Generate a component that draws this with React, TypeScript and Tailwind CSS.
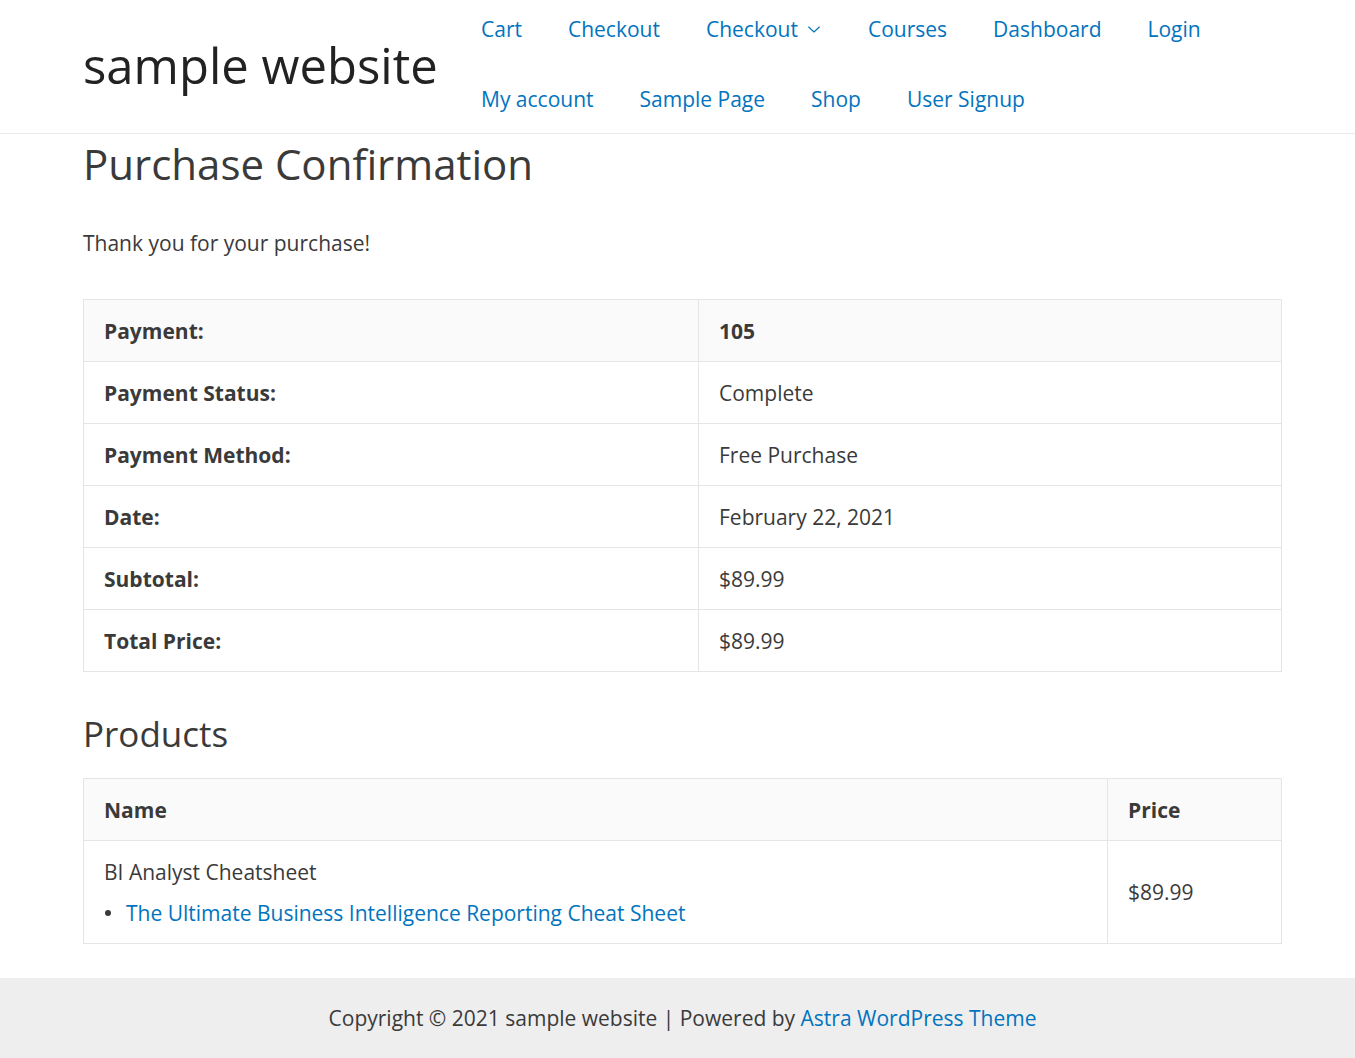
import React from "react";

const navRow1 = ["Cart", "Checkout", "Checkout▾", "Courses", "Dashboard", "Login"];
const navRow2 = ["My account", "Sample Page", "Shop", "User Signup"];

function NavItem({ label }: { label: string }) {
  const hasChevron = label.endsWith("▾");
  const text = hasChevron ? label.slice(0, -1) : label;
  return (
    <li className="h-[70px] px-[23px] flex items-center">
      <a href="#" className="text-[#0274be] flex items-center">
        {text}
        {hasChevron && (
          <svg
            className="ml-[8px]"
            width="16"
            height="16"
            viewBox="0 0 24 24"
            fill="none"
            stroke="#0274be"
            strokeWidth="1.7"
            strokeLinecap="round"
            strokeLinejoin="round"
          >
            <path d="M4 9l8 7.5 8-7.5" />
          </svg>
        )}
      </a>
    </li>
  );
}

const rows: [string, string, boolean][] = [
  ["Payment:", "105", true],
  ["Payment Status:", "Complete", false],
  ["Payment Method:", "Free Purchase", false],
  ["Date:", "February 22, 2021", false],
  ["Subtotal:", "$89.99", false],
  ["Total Price:", "$89.99", false],
];

export default function App() {
  return (
    <div
      className="min-h-screen bg-white text-[#3a3a3a]"
      style={{ fontFamily: '"Open Sans", "Noto Sans", sans-serif' }}
    >
      <header className="h-[134px] border-b border-[#eaeaea]">
        <div className="ml-[83px] w-[1199px] flex h-full">
          <div className="w-[375px] flex items-center pb-[2px]">
            <a href="#" className="text-[49px] leading-none text-[#222222]">
              sample website
            </a>
          </div>
          <nav className="-mt-[6px] text-[21px] leading-[30px]">
            <ul className="flex">
              {navRow1.map((l) => (
                <NavItem key={l} label={l} />
              ))}
            </ul>
            <ul className="flex">
              {navRow2.map((l) => (
                <NavItem key={l} label={l} />
              ))}
            </ul>
          </nav>
        </div>
      </header>

      <main className="ml-[83px] w-[1199px] text-[21px] leading-[30px]">
        <h1 className="text-[42px] leading-[60px] font-normal">Purchase Confirmation</h1>
        <p className="mt-[34px]">Thank you for your purchase!</p>

        <table className="mt-[41px] w-full border-collapse border border-[#e5e5e5]">
          <tbody>
            {rows.map(([k, v, head]) => (
              <tr key={k} className={head ? "bg-[#fafafa]" : "bg-white"}>
                <th className="w-[615px] h-[62px] border border-[#e5e5e5] px-5 text-left font-bold">
                  {k}
                </th>
                <td
                  className={
                    "h-[62px] border border-[#e5e5e5] px-5 text-left " +
                    (head ? "font-bold" : "font-normal")
                  }
                >
                  {v}
                </td>
              </tr>
            ))}
          </tbody>
        </table>

        <h2 className="mt-[37px] text-[35px] leading-[50px] font-normal">Products</h2>

        <table className="mt-[19px] w-full border-collapse border border-[#e5e5e5]">
          <thead>
            <tr className="bg-[#fafafa]">
              <th className="h-[62px] border border-[#e5e5e5] px-5 text-left font-bold">Name</th>
              <th className="w-[174px] h-[62px] border border-[#e5e5e5] px-5 text-left font-bold">
                Price
              </th>
            </tr>
          </thead>
          <tbody>
            <tr>
              <td className="border border-[#e5e5e5] px-5 pt-[16px] pb-[15px] align-top">
                <div>BI Analyst Cheatsheet</div>
                <ul className="mt-[11px]">
                  <li className="flex items-center">
                    <span className="w-[6px] h-[6px] rounded-full bg-[#3a3a3a] ml-[1px] mr-[15px]" />
                    <a href="#" className="text-[#0274be]">
                      The Ultimate Business Intelligence Reporting Cheat Sheet
                    </a>
                  </li>
                </ul>
              </td>
              <td className="border border-[#e5e5e5] px-5 align-middle">$89.99</td>
            </tr>
          </tbody>
        </table>
      </main>

      <footer className="mt-[34px] bg-[#eeeeee] h-[81px] flex items-center justify-center pl-[10px] pt-[1px] text-[21px]">
        <p>
          Copyright © 2021 sample website | Powered by{" "}
          <a href="#" className="text-[#0274be]">
            Astra WordPress Theme
          </a>
        </p>
      </footer>
    </div>
  );
}
